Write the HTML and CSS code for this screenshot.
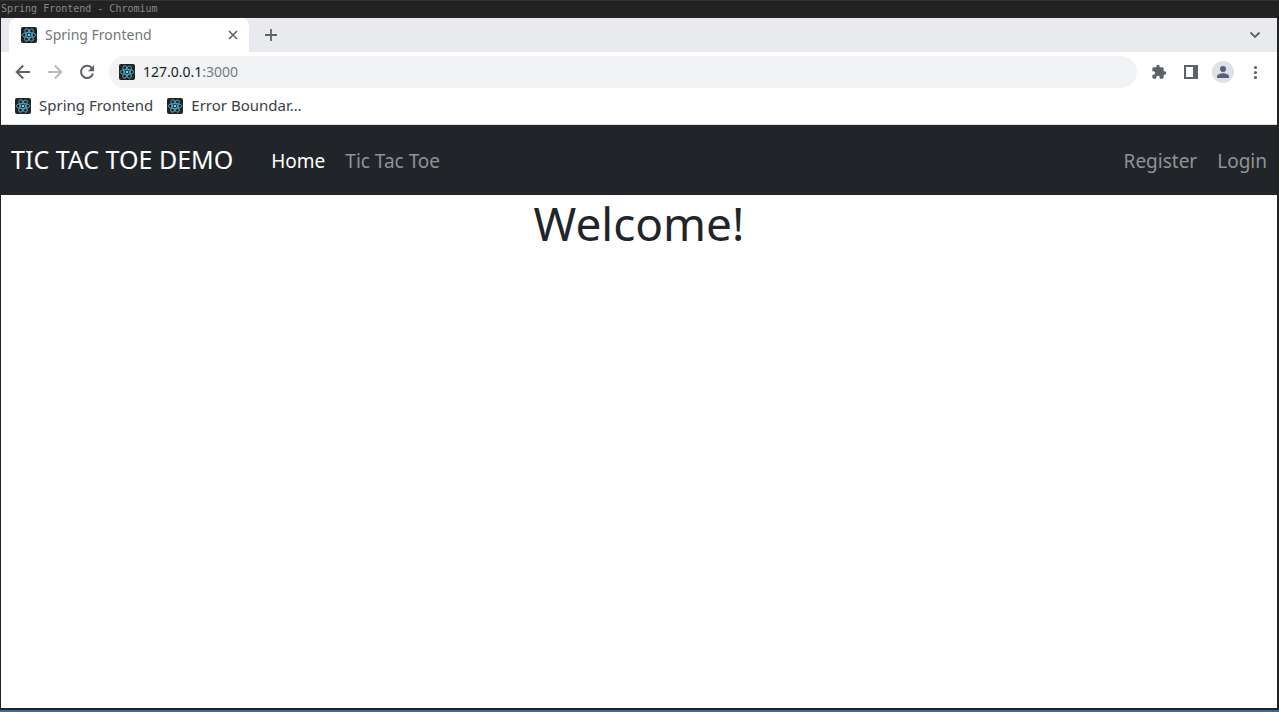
FILE: index.html
```html
<!DOCTYPE html>
<html lang="en">
<head>
<meta charset="utf-8">
<title>Spring Frontend</title>
<link rel="stylesheet" href="styles.css">
</head>
<body>
<svg class="defs" aria-hidden="true">
  <symbol id="react" viewBox="0 0 16 16">
    <rect width="16" height="16" rx="2" fill="#222222"/>
    <g fill="none" stroke="#4fa9c2" stroke-width=".9">
      <ellipse cx="8" cy="8" rx="6.900" ry="2.600"/>
      <ellipse cx="8" cy="8" rx="6.900" ry="2.600" transform="rotate(60 8 8)"/>
      <ellipse cx="8" cy="8" rx="6.900" ry="2.600" transform="rotate(120 8 8)"/>
    </g>
    <circle cx="8" cy="8" r="1.300" fill="#61dafb"/>
  </symbol>
</svg>
<div class="window">
  <div class="titlebar">Spring Frontend - Chromium</div>
  <div class="browser">
    <div class="tabstrip">
      <div class="tab">
        <svg class="favicon"><use href="#react"/></svg>
        <span class="tab-title">Spring Frontend</span>
        <button class="icon-button close" aria-label="Close tab"><svg width="16" height="16" viewBox="0 0 16 16"><path d="M4 4l8 8M12 4l-8 8" stroke="#5f6368" stroke-width="1.6"/></svg></button>
      </div>
      <button class="icon-button new-tab" aria-label="New tab"><svg width="16" height="16" viewBox="0 0 16 16"><path d="M8 2v12M2 8h12" stroke="#5f6368" stroke-width="1.8"/></svg></button>
      <button class="icon-button tab-search" aria-label="Search tabs"><svg width="16" height="16" viewBox="0 0 16 16"><path d="M3.500 5.500L8 10l4.500-4.500" fill="none" stroke="#5f6368" stroke-width="1.8"/></svg></button>
    </div>
    <div class="toolbar">
      <div class="controls">
        <button class="icon-button" aria-label="Back"><svg width="16" height="16" viewBox="0 0 16 16"><path d="M15 8H2.500M8.200 1.500L1.700 8l6.500 6.500" fill="none" stroke="#5f6368" stroke-width="2"/></svg></button>
        <button class="icon-button" aria-label="Forward" disabled><svg width="16" height="16" viewBox="0 0 16 16"><path d="M1 8h12.500M7.800 1.500L14.300 8l-6.500 6.500" fill="none" stroke="#b9bbbd" stroke-width="2"/></svg></button>
        <button class="icon-button" aria-label="Reload"><svg width="16" height="16" viewBox="0 0 16 16"><path d="M13 4.200A6.100 6.100 0 1 0 14 9.500" fill="none" stroke="#5f6368" stroke-width="2"/><path d="M15 1v6.200H8.800z" fill="#5f6368"/></svg></button>
      </div>
      <div class="address">
        <svg class="favicon"><use href="#react"/></svg>
        <span class="url" role="textbox" aria-label="Address" tabindex="0">127.0.0.1<span class="port">:3000</span></span>
      </div>
      <div class="controls">
        <button class="icon-button" aria-label="Extensions"><svg width="16" height="16" viewBox="0 0 24 24"><path fill="#5f6368" d="M20.500 11H19V7c0-1.100-.9-2-2-2h-4V3.500a2.500 2.500 0 0 0-5 0V5H4c-1.100 0-2 .9-2 2v3.800h1.500a2.700 2.700 0 0 1 0 5.400H2V20c0 1.100.9 2 2 2h3.800v-1.500a2.700 2.700 0 0 1 5.400 0V22H17c1.100 0 2-.9 2-2v-4h1.500a2.500 2.500 0 0 0 0-5z"/></svg></button>
        <button class="icon-button" aria-label="Side panel"><svg width="14" height="14" viewBox="0 0 14 14"><path fill="#5f6368" fill-rule="evenodd" d="M0 0h14v14H0zM2 2v10h7V2z"/></svg></button>
        <button class="icon-button" aria-label="Profile"><svg width="22" height="22" viewBox="0 0 22 22"><circle cx="11" cy="11" r="11" fill="#dee1e6"/><circle cx="11" cy="8" r="3" fill="#57617a"/><path fill="#57617a" d="M5 17v-1.500c0-2.200 4-3.300 6-3.300s6 1.100 6 3.300V17z"/></svg></button>
        <button class="icon-button" aria-label="Menu"><svg width="16" height="16" viewBox="0 0 16 16" fill="#5f6368"><circle cx="8.500" cy="3.500" r="1.600"/><circle cx="8.500" cy="8.500" r="1.600"/><circle cx="8.500" cy="13.500" r="1.600"/></svg></button>
      </div>
    </div>
    <div class="bookmarks">
      <a href="#"><svg class="favicon"><use href="#react"/></svg><span>Spring Frontend</span></a>
      <a href="#"><svg class="favicon"><use href="#react"/></svg><span>Error Boundar…</span></a>
    </div>
    <nav class="navbar">
      <a class="brand" href="#">TIC TAC TOE DEMO</a>
      <div class="links">
        <a class="active" href="#">Home</a>
        <a href="#">Tic Tac Toe</a>
      </div>
      <div class="links account">
        <a href="#">Register</a>
        <a href="#">Login</a>
      </div>
    </nav>
    <main class="page"><h1>Welcome!</h1></main>
  </div>
</div>
</body>
</html>
```
FILE: styles.css
```css
* { box-sizing: border-box; }
body { margin: 0; font-family: "Noto Sans", sans-serif; background: #fff; }
a { color: inherit; text-decoration: none; }
.defs { position: absolute; width: 0; height: 0; }
.window { display: flex; flex-direction: column; min-height: 100vh; background: #222; border-bottom: 2px solid #3b6e8c; }
.titlebar { height: 18px; padding: 0 1px; border-top: 1px solid #333; border-bottom: 1px solid #2b1f2b; font: 10px/15px "DejaVu Sans Mono", monospace; color: #888; }
.browser { flex: 1; display: flex; flex-direction: column; margin: 0 2px 2px 1px; background: #fff; }
.icon-button { display: flex; align-items: center; justify-content: center; width: 32px; height: 32px; padding: 0; border: 0; background: none; }
.favicon { width: 16px; height: 16px; flex: none; }
.tabstrip { display: flex; align-items: center; height: 34px; padding: 0 6px 0 8px; background: #e8eaed; }
.tab { display: flex; align-items: center; gap: 8px; width: 240px; height: 34px; padding: 0 8px 0 12px; border-radius: 8px 8px 0 0; background: #fff; font-size: 14px; color: #72777b; }
.tab-title { flex: 1; padding-bottom: 2px; }
.close { width: 16px; }
.new-tab { margin-left: 6px; }
.tab-search { margin-left: auto; }
.toolbar { display: flex; align-items: center; gap: 6px; height: 40px; padding: 0 6px; }
.controls { display: flex; }
.address { display: flex; flex: 1; align-items: center; gap: 8px; height: 32px; padding: 0 10px; border-radius: 16px; background: #f1f3f4; font-size: 14px; color: #202124; }
.url { padding-bottom: 2px; }
.port { color: #777b80; }
.bookmarks { display: flex; align-items: center; gap: 14px; height: 33px; padding: 0 14px 4px; border-bottom: 1px solid #dadce0; font-size: 15px; color: #3c4043; }
.bookmarks a { display: flex; align-items: center; gap: 8px; }
.bookmarks span { padding-bottom: 2px; }
.navbar { display: flex; align-items: center; height: 70px; padding: 0 10px; background: #212529; font-size: 19px; color: #909294; }
.brand { margin-right: 38px; padding-bottom: 2px; font-size: 25px; color: #fff; }
.links { display: flex; gap: 20px; padding-top: 2px; }
.active { color: #fff; }
.account { margin-left: auto; }
.page { flex: 1; color: #212529; text-align: center; }
h1 { margin: 0; font-size: 46px; line-height: 56px; font-weight: 400; }
```
